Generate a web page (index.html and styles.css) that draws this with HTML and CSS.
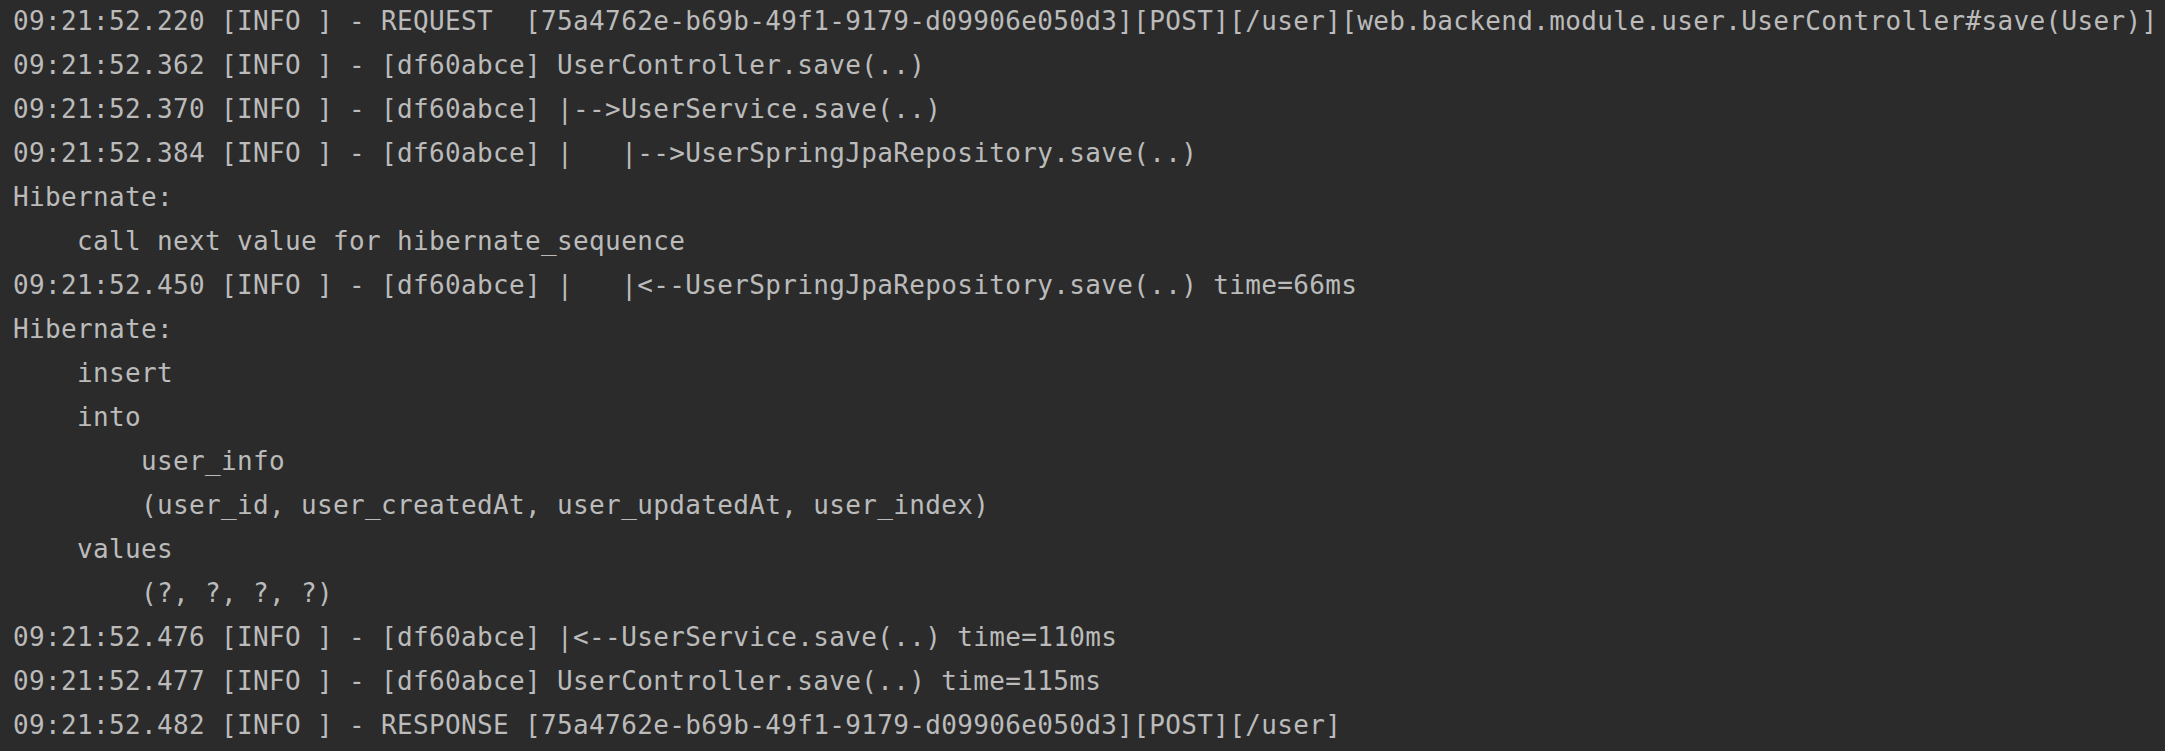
FILE: index.html
```html
<!DOCTYPE html>
<html lang="en">
<head>
<meta charset="utf-8">
<title>Console log</title>
<link rel="stylesheet" href="styles.css">
</head>
<body>
<main class="console">
<pre class="log">09:21:52.220 [INFO ] - REQUEST  [75a4762e-b69b-49f1-9179-d09906e050d3][POST][/user][web.backend.module.user.UserController#save(User)]
09:21:52.362 [INFO ] - [df60abce] UserController.save(..)
09:21:52.370 [INFO ] - [df60abce] |-->UserService.save(..)
09:21:52.384 [INFO ] - [df60abce] |   |-->UserSpringJpaRepository.save(..)
Hibernate: 
    call next value for hibernate_sequence
09:21:52.450 [INFO ] - [df60abce] |   |&lt;--UserSpringJpaRepository.save(..) time=66ms
Hibernate: 
    insert 
    into
        user_info
        (user_id, user_createdAt, user_updatedAt, user_index) 
    values
        (?, ?, ?, ?)
09:21:52.476 [INFO ] - [df60abce] |&lt;--UserService.save(..) time=110ms
09:21:52.477 [INFO ] - [df60abce] UserController.save(..) time=115ms
09:21:52.482 [INFO ] - RESPONSE [75a4762e-b69b-49f1-9179-d09906e050d3][POST][/user]</pre>
</main>
</body>
</html>
```

FILE: styles.css
```css
html, body {
  margin: 0;
  padding: 0;
  background: #2b2b2b;
  height: 100%;
}

.console {
  background: #2b2b2b;
  min-height: 751px;
  padding: 0 0 0 13px;
  box-sizing: border-box;
  overflow: hidden;
}

.log {
  margin: -1px 0 0 0;
  font-family: "DejaVu Sans Mono", "Liberation Mono", monospace;
  font-size: 26px;
  letter-spacing: 0.35px;
  line-height: 44px;
  color: #bbbbbb;
  white-space: pre;
}
```
